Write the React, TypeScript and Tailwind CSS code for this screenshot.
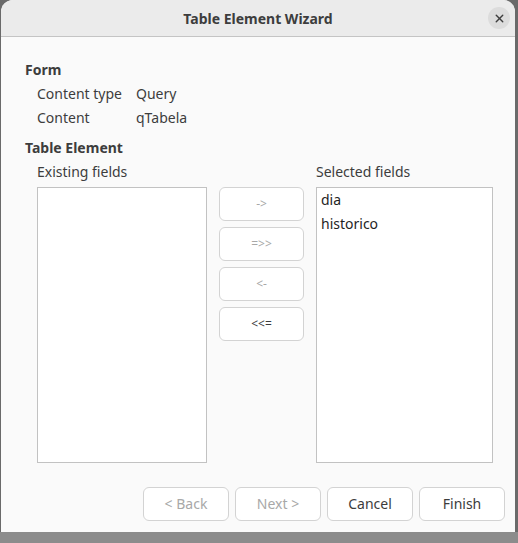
import { X } from "lucide-react";

const font = { fontFamily: '"Noto Sans", "Open Sans", sans-serif' };

function MoveButton({ label, disabled = false }: { label: string; disabled?: boolean }) {
  return (
    <button
      type="button"
      className={`h-[34px] w-[85px] rounded-[6px] border border-[#d3d3d3] bg-white text-[12px] ${
        disabled ? "text-[#a8a8a8]" : "text-[#3c3c3c]"
      }`}
    >
      {label}
    </button>
  );
}

function FooterButton({ label, disabled = false }: { label: string; disabled?: boolean }) {
  return (
    <button
      type="button"
      className={`h-[34px] w-[86px] rounded-[6px] border border-[#d3d3d3] bg-white text-[14px] ${
        disabled ? "text-[#a8a8a8]" : "text-[#3c3c3c]"
      }`}
    >
      {label}
    </button>
  );
}

export default function App() {
  const selected = ["dia", "historico"];

  return (
    <div className="flex h-[543px] w-[518px] flex-col bg-[#6a6a6a]" style={font}>
      <div className="ml-[1px] flex h-[532px] w-[514px] flex-col overflow-hidden rounded-t-[12px] bg-[#fafafa]">
        {/* title bar */}
        <div className="relative flex h-[37px] shrink-0 items-center justify-center border-b border-[#c4c4c4] bg-[#ebebeb]">
          <span className="text-[14px] font-bold text-[#3d3d3d]">Table Element Wizard</span>
          <button
            type="button"
            className="absolute right-[5px] top-[7px] flex h-[22px] w-[22px] items-center justify-center rounded-full bg-[#dcdcdc] text-[#3d3d3d]"
          >
            <X size={13} strokeWidth={2.5} />
          </button>
        </div>

        <div className="flex flex-1 flex-col pl-[24px] pt-[21px] text-[14px] leading-[24px] text-[#3d3d3d]">
          <div className="font-bold">Form</div>
          <div className="grid grid-cols-[99px_1fr] pl-[12px]">
            <span>Content type</span>
            <span>Query</span>
            <span>Content</span>
            <span>qTabela</span>
          </div>

          <div className="mt-[6px] font-bold">Table Element</div>

          <div className="flex gap-[12px] pl-[12px]">
            <div className="flex w-[170px] flex-col">
              <span>Existing fields</span>
              <div className="mt-[3px] h-[276px] border border-[#c2c2c2] bg-white" />
            </div>

            <div className="flex flex-col gap-[6px] pt-[27px]">
              <MoveButton label="->" disabled />
              <MoveButton label="=>>" disabled />
              <MoveButton label="<-" disabled />
              <MoveButton label="<<=" />
            </div>

            <div className="flex w-[177px] flex-col">
              <span>Selected fields</span>
              <div className="mt-[3px] flex h-[276px] flex-col border border-[#c2c2c2] bg-white px-[4px] text-[#1f1f1f]">
                {selected.map((f) => (
                  <span key={f}>{f}</span>
                ))}
              </div>
            </div>
          </div>

          <div className="mt-[24px] flex justify-end gap-[6px] pr-[10px]">
            <FooterButton label="< Back" disabled />
            <FooterButton label="Next >" disabled />
            <FooterButton label="Cancel" />
            <FooterButton label="Finish" />
          </div>
        </div>
      </div>
      <div className="flex-1 bg-[#8c8c8c]" />
    </div>
  );
}
